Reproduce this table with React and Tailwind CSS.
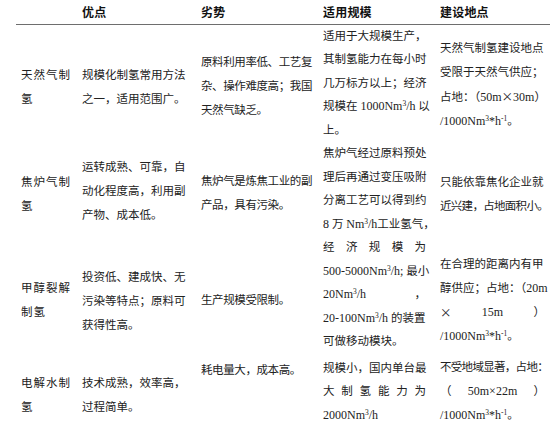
import React from "react";

// 制氢方式对比表
const cols = "grid grid-cols-[66px_119px_122px_117px_110px]";

function Ln({ className = "", children }) {
  return <div className={`whitespace-nowrap ${className}`}>{children}</div>;
}

function N({ children }) {
  return <span className="text-[12px]">{children}</span>;
}

function Sup({ children }) {
  return <sup className="text-[7.5px]">{children}</sup>;
}

function X() {
  return <span className="font-['Noto_Sans_CJK_SC',sans-serif]">×</span>;
}

function Spread({ items, className = "w-[103px]" }) {
  return (
    <div className={`flex justify-between whitespace-nowrap ${className}`}>
      {items.map((t, i) => (
        <span key={i}>{t}</span>
      ))}
    </div>
  );
}

function Unit() {
  return (
    <Ln>
      <N>
        /1000Nm<Sup>3</Sup>*h<Sup>-1</Sup>
      </N>
      。
    </Ln>
  );
}

export default function App() {
  return (
    <div className="h-[436px] w-[550px] overflow-hidden bg-white pl-[16px] font-['Liberation_Serif','Noto_Sans_CJK_SC',serif] text-[11.5px] text-[#222]">
      {/* Header */}
      <div
        className={`${cols} h-[24.5px] items-center border-b-[1.5px] border-[#6e6e6e] pt-[3px] text-[12px] font-bold tracking-[0.2px] text-[#111]`}
      >
        <div />
        <div>优点</div>
        <div>劣势</div>
        <div>适用规模</div>
        <div>建设地点</div>
      </div>

      {/* Body */}
      <div className={`${cols} leading-[24px]`}>
        {/* 天然气制氢 */}
        <div className="self-center pl-[5px] pt-[8px] tracking-[1px]">
          <Ln>天然气制</Ln>
          <Ln>氢</Ln>
        </div>
        <div className="self-center pt-[8px]">
          <Ln>规模化制氢常用方法</Ln>
          <Ln>之一，适用范围广。</Ln>
        </div>
        <div className="self-center pt-[5px] tracking-[-0.4px]">
          <Ln>原料利用率低、工艺复</Ln>
          <Ln>杂、操作难度高；我国</Ln>
          <Ln>天然气缺乏。</Ln>
        </div>
        <div className="self-center leading-[23.5px]">
          <Ln>适用于大规模生产，</Ln>
          <Ln>其制氢能力在每小时</Ln>
          <Ln>几万标方以上；经济</Ln>
          <Ln>
            规模在 <N>1000Nm<Sup>3</Sup>/h</N> 以
          </Ln>
          <Ln>上。</Ln>
        </div>
        <div className="self-center pt-[2px]">
          <Ln>天然气制氢建设地点</Ln>
          <Ln>受限于天然气供应；</Ln>
          <Ln>
            占地：（<N>50m</N>
            <X />
            <N>30m</N>）
          </Ln>
          <Unit />
        </div>

        {/* 焦炉气制氢 */}
        <div className="self-center pl-[5px] pt-[9px] tracking-[1px]">
          <Ln>焦炉气制</Ln>
          <Ln>氢</Ln>
        </div>
        <div className="self-center pt-[4px]">
          <Ln>运转成熟、可靠，自</Ln>
          <Ln>动化程度高，利用副</Ln>
          <Ln>产物、成本低。</Ln>
        </div>
        <div className="self-center pt-[7px] tracking-[-0.4px]">
          <Ln>焦炉气是炼焦工业的副</Ln>
          <Ln>产品，具有污染。</Ln>
        </div>
        <div className="self-center leading-[23.5px]">
          <Ln>焦炉气经过原料预处</Ln>
          <Ln>理后再通过变压吸附</Ln>
          <Ln>分离工艺可以得到约</Ln>
          <Ln>
            <N>8</N> 万 <N>Nm<Sup>3</Sup>/h</N>工业氢气，
          </Ln>
        </div>
        <div className="self-center pt-[10px]">
          <Ln>只能依靠焦化企业就</Ln>
          <Ln className="tracking-[-0.7px]">近兴建，占地面积小。</Ln>
        </div>

        {/* 甲醇裂解制氢 */}
        <div className="self-center pl-[5px] pt-[10px] tracking-[1px]">
          <Ln>甲醇裂解</Ln>
          <Ln>制氢</Ln>
        </div>
        <div className="self-center pt-[12px]">
          <Ln>投资低、建成快、无</Ln>
          <Ln>污染等特点；原料可</Ln>
          <Ln>获得性高。</Ln>
        </div>
        <div className="self-center pt-[10px] tracking-[-0.4px]">
          <Ln>生产规模受限制。</Ln>
        </div>
        <div className="self-center leading-[23.5px]">
          <Spread items={["经", "济", "规", "模", "为"]} />
          <Ln>
            <N>500-5000Nm<Sup>3</Sup>/h;</N> 最小
          </Ln>
          <div className="flex w-[103px] justify-between whitespace-nowrap">
            <N>20Nm<Sup>3</Sup>/h</N>
            <span>，</span>
          </div>
          <Ln>
            <N>20-100Nm<Sup>3</Sup>/h</N> 的装置
          </Ln>
          <Ln>可做移动模块。</Ln>
        </div>
        <div className="self-center pt-[10px]">
          <Ln>在合理的距离内有甲</Ln>
          <Ln>
            醇供应；占地：（<N>20m</N>
          </Ln>
          <div className="flex w-[105px] justify-between whitespace-nowrap">
            <X />
            <N>15m</N>
            <span>）</span>
          </div>
          <Unit />
        </div>

        {/* 电解水制氢 */}
        <div className="self-center pl-[5px] pt-[10px] tracking-[1px]">
          <Ln>电解水制</Ln>
          <Ln>氢</Ln>
        </div>
        <div className="self-center pt-[10px]">
          <Ln>技术成熟，效率高，</Ln>
          <Ln>过程简单。</Ln>
        </div>
        <div className="self-start pt-[4px] tracking-[-0.4px]">
          <Ln>耗电量大，成本高。</Ln>
        </div>
        <div className="self-center pt-[3px] leading-[23.5px]">
          <Ln>规模小，国内单台最</Ln>
          <Spread items={["大", "制", "氢", "能", "力", "为"]} />
          <Ln>
            <N>2000Nm<Sup>3</Sup>/h</N>
          </Ln>
        </div>
        <div className="self-center pt-[1px]">
          <Ln className="tracking-[-0.7px]">不受地域显著，占地：</Ln>
          <div className="flex w-[105px] justify-between whitespace-nowrap">
            <span>（</span>
            <N>50m×22m</N>
            <span>）</span>
          </div>
          <Unit />
        </div>
      </div>
    </div>
  );
}
